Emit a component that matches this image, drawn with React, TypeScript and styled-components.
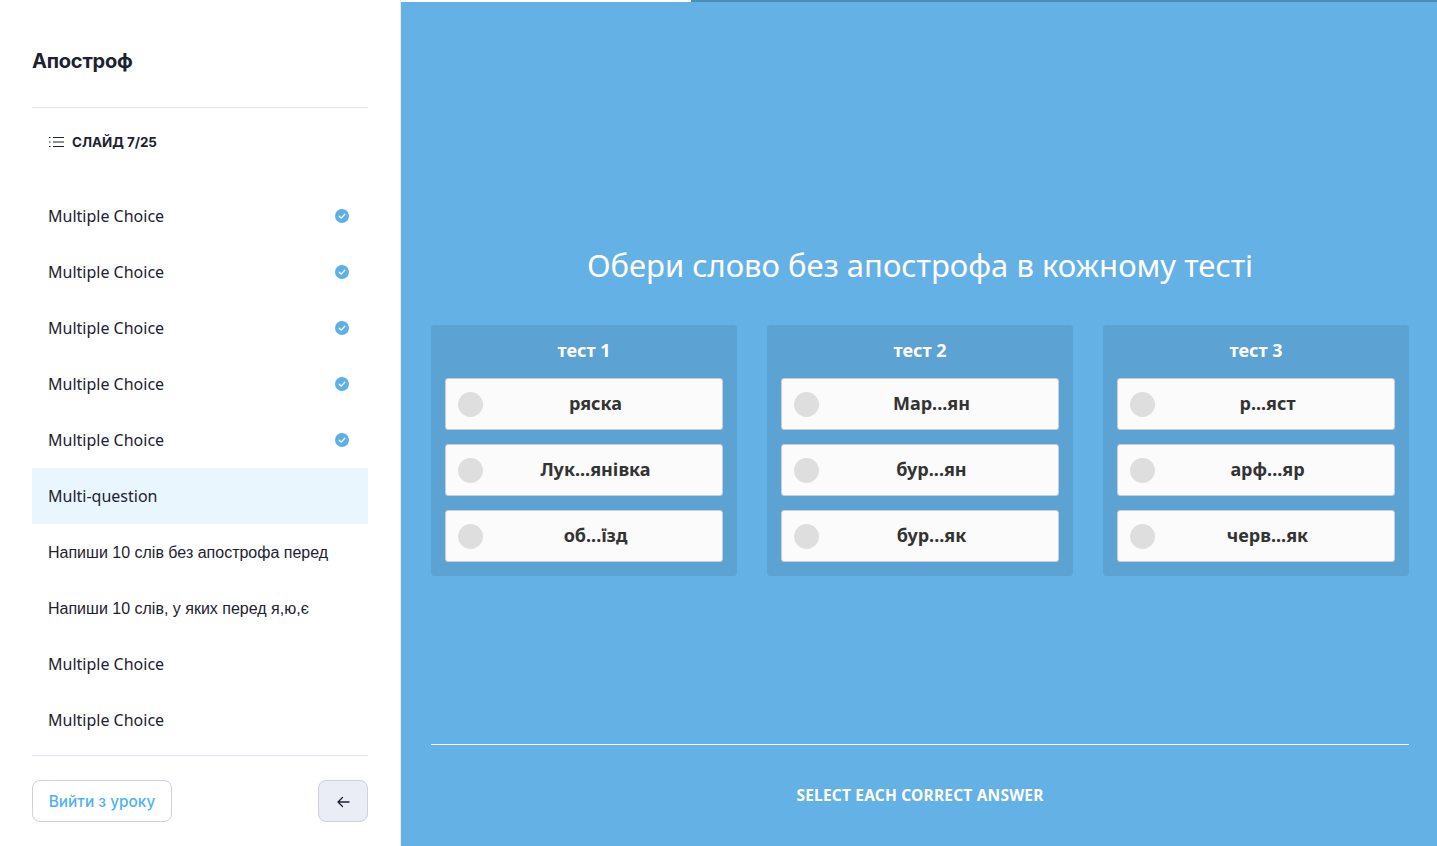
import React from "react";
import styled, { createGlobalStyle } from "styled-components";

const GlobalStyle = createGlobalStyle`
  html, body {
    margin: 0;
    padding: 0;
    background: #fff;
  }
  * {
    box-sizing: border-box;
  }
`;

const Page = styled.div`
  display: flex;
  width: 100%;
  height: 846px;
  overflow: hidden;
`;

const Sidebar = styled.aside`
  flex: 0 0 401px;
  display: flex;
  flex-direction: column;
  padding: 0 32px;
  border-right: 1px solid #e9ebf2;
  color: #1c2230;
`;

const LessonTitle = styled.h1`
  height: 108px;
  margin: 0;
  padding-top: 48px;
  border-bottom: 1px solid #e3e5ee;
  font-family: Inter, sans-serif;
  font-size: 20px;
  line-height: 26px;
  font-weight: 700;
  letter-spacing: -0.2px;
`;

const SlideCounter = styled.div`
  display: flex;
  align-items: center;
  gap: 8px;
  height: 80px;
  padding: 0 0 13px 17px;
  font-family: Inter, sans-serif;
  font-size: 13.4px;
  font-weight: 700;
`;

const LessonList = styled.ul`
  list-style: none;
  margin: 0;
  padding: 0;
`;

const LessonItem = styled.li<{ $active?: boolean; $plain?: boolean }>`
  display: flex;
  align-items: center;
  justify-content: space-between;
  height: 56px;
  padding: ${(p) => (p.$plain ? "2px" : "0")} 19px 0 16px;
  background: ${(p) => (p.$active ? "#eaf6fe" : "transparent")};
  font-family: ${(p) => (p.$plain ? '"Liberation Sans"' : '"Noto Sans"')}, sans-serif;
  font-size: 16px;
  white-space: nowrap;
`;

const SidebarFooter = styled.div`
  display: flex;
  justify-content: space-between;
  margin-top: 7px;
  padding-top: 24px;
  border-top: 1px solid #e3e5ee;
`;

const ExitButton = styled.button`
  width: 140px;
  height: 42px;
  padding: 0;
  border: 1px solid #ccd1df;
  border-radius: 8px;
  background: #fff;
  color: #4db2f5;
  font-family: Inter, sans-serif;
  font-size: 15.4px;
  font-weight: 500;
`;

const BackButton = styled.button`
  display: flex;
  align-items: center;
  justify-content: center;
  width: 50px;
  height: 42px;
  padding: 2px 0 0;
  border: 1px solid #ccd1df;
  border-radius: 8px;
  background: #eaecf6;
  color: #1c2230;
`;

const Main = styled.main`
  flex: 1;
  display: flex;
  flex-direction: column;
  background: #64b1e5;
  color: #fff;
`;

const Progress = styled.div`
  flex: 0 0 2px;
  background: #4a8db9;
`;

const ProgressFill = styled.div`
  height: 100%;
  background: #fff;
`;

const Content = styled.div`
  flex: 1;
  display: flex;
  flex-direction: column;
  padding: 0 28px 0 30px;
`;

const Question = styled.h2`
  height: 323px;
  margin: 0;
  padding-top: 241px;
  text-align: center;
  font-family: "Noto Sans", sans-serif;
  font-size: 31px;
  line-height: 44px;
  font-weight: 400;
`;

const Tests = styled.div`
  display: grid;
  grid-template-columns: repeat(3, 306px);
  justify-content: space-between;
`;

const TestCard = styled.section`
  height: 251px;
  padding: 0 14px;
  border-radius: 4px;
  background: #5ca2d2;
`;

const TestName = styled.h3`
  height: 53px;
  margin: 0;
  text-align: center;
  font-family: "Noto Sans", sans-serif;
  font-size: 18px;
  line-height: 50px;
  font-weight: 700;
`;

const Options = styled.div`
  display: flex;
  flex-direction: column;
  gap: 14px;
`;

const Option = styled.button`
  display: flex;
  align-items: center;
  width: 278px;
  height: 52px;
  padding: 0 14px 0 12px;
  border: 1px solid #c9ccd0;
  border-radius: 3px;
  background: #fbfbfb;
  color: #333;
  font-family: "Noto Sans", sans-serif;
  font-size: 18px;
  font-weight: 700;
`;

const Radio = styled.span`
  flex: 0 0 25px;
  height: 25px;
  border-radius: 50%;
  background: #dedede;
`;

const OptionText = styled.span`
  flex: 1;
  padding-bottom: 3px;
  text-align: center;
`;

const Footer = styled.footer`
  margin-top: 168px;
  height: 100px;
  border-top: 1px solid #fff;
  padding-top: 38px;
  text-align: center;
  font-family: "Noto Sans", sans-serif;
  font-size: 15.5px;
  line-height: 24px;
  font-weight: 700;
  letter-spacing: 0.2px;
`;

const lessons = [
  { title: "Multiple Choice", done: true },
  { title: "Multiple Choice", done: true },
  { title: "Multiple Choice", done: true },
  { title: "Multiple Choice", done: true },
  { title: "Multiple Choice", done: true },
  { title: "Multi-question", active: true },
  { title: "Напиши 10 слів без апострофа перед", plain: true },
  { title: "Напиши 10 слів, у яких перед я,ю,є", plain: true },
  { title: "Multiple Choice" },
  { title: "Multiple Choice" },
];

const tests = [
  { name: "тест 1", options: ["ряска", "Лук...янівка", "об...їзд"] },
  { name: "тест 2", options: ["Мар...ян", "бур...ян", "бур...як"] },
  { name: "тест 3", options: ["р...яст", "арф...яр", "черв...як"] },
];

function ListIcon() {
  return (
    <svg width="15" height="12" viewBox="0 0 15 12" fill="none" stroke="#1c2230" strokeWidth="1">
      <path d="M4 1.5h11M4 6h11M4 10.5h11" />
      <path d="M0 1.5h1.5M0 6h1.5M0 10.5h1.5" />
    </svg>
  );
}

function DoneIcon() {
  return (
    <svg width="14" height="14" viewBox="0 0 14 14" fill="none">
      <circle cx="7" cy="7" r="7" fill="#5cb0e6" />
      <path d="M4.2 7.3l2 1.8 3.6-3.8" stroke="#fff" strokeWidth="1.3" strokeLinecap="round" strokeLinejoin="round" />
    </svg>
  );
}

function ArrowIcon() {
  return (
    <svg width="13" height="12" viewBox="0 0 13 12" fill="none" stroke="#1c2230" strokeWidth="1.3" strokeLinecap="round" strokeLinejoin="round">
      <path d="M12 6H1M5.5 1.5L1 6l4.5 4.5" />
    </svg>
  );
}

export default function App() {
  return (
    <>
      <GlobalStyle />
      <Page>
        <Sidebar>
          <LessonTitle>Апостроф</LessonTitle>
          <SlideCounter>
            <ListIcon />
            СЛАЙД 7/25
          </SlideCounter>
          <LessonList>
            {lessons.map((lesson, i) => (
              <LessonItem key={i} $active={lesson.active} $plain={lesson.plain}>
                {lesson.title}
                {lesson.done && <DoneIcon />}
              </LessonItem>
            ))}
          </LessonList>
          <SidebarFooter>
            <ExitButton>Вийти з уроку</ExitButton>
            <BackButton>
              <ArrowIcon />
            </BackButton>
          </SidebarFooter>
        </Sidebar>
        <Main>
          <Progress>
            <ProgressFill style={{ width: `${(7 / 25) * 100}%` }} />
          </Progress>
          <Content>
            <Question>Обери слово без апострофа в кожному тесті</Question>
            <Tests>
              {tests.map((test) => (
                <TestCard key={test.name}>
                  <TestName>{test.name}</TestName>
                  <Options>
                    {test.options.map((option) => (
                      <Option key={option}>
                        <Radio />
                        <OptionText>{option}</OptionText>
                      </Option>
                    ))}
                  </Options>
                </TestCard>
              ))}
            </Tests>
            <Footer>SELECT EACH CORRECT ANSWER</Footer>
          </Content>
        </Main>
      </Page>
    </>
  );
}
